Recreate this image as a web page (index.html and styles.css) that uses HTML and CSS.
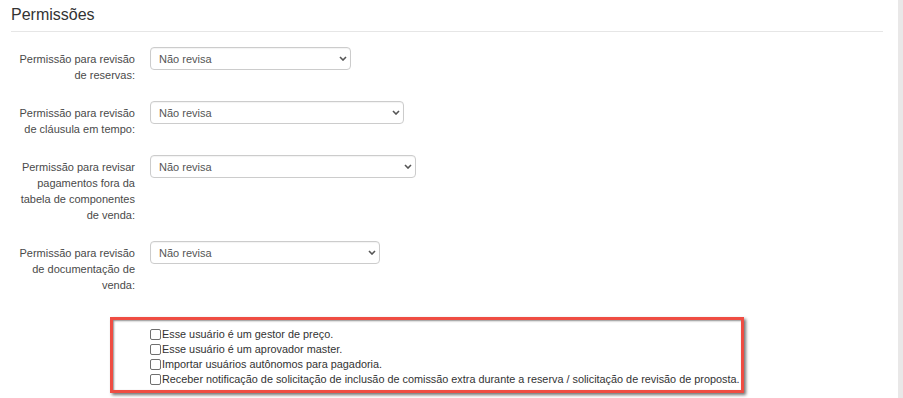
FILE: index.html
```html
<!DOCTYPE html>
<html lang="pt-BR">
<head>
  <meta charset="UTF-8">
  <meta name="viewport" content="width=device-width, initial-scale=1.0">
  <title>Permissões</title>
  <link rel="stylesheet" href="styles.css">
</head>
<body>
  <div class="page">
    <div class="content">
      <h1>Permissões</h1>
      <hr>

      <form class="perm-form">
        <div class="form-row">
          <label for="revReservas">Permissão para revisão de reservas:</label>
          <div class="select-wrap w1">
            <select id="revReservas"><option>Não revisa</option></select>
            <svg class="chev" width="8" height="5" viewBox="0 0 8 5"><path d="M1 1l3 3 3-3" fill="none" stroke="#555" stroke-width="1.6"/></svg>
          </div>
        </div>

        <div class="form-row">
          <label for="revClausula">Permissão para revisão de cláusula em tempo:</label>
          <div class="select-wrap w2">
            <select id="revClausula"><option>Não revisa</option></select>
            <svg class="chev" width="8" height="5" viewBox="0 0 8 5"><path d="M1 1l3 3 3-3" fill="none" stroke="#555" stroke-width="1.6"/></svg>
          </div>
        </div>

        <div class="form-row">
          <label for="revPagamentos">Permissão para revisar pagamentos fora da tabela de componentes de venda:</label>
          <div class="select-wrap w3">
            <select id="revPagamentos"><option>Não revisa</option></select>
            <svg class="chev" width="8" height="5" viewBox="0 0 8 5"><path d="M1 1l3 3 3-3" fill="none" stroke="#555" stroke-width="1.6"/></svg>
          </div>
        </div>

        <div class="form-row">
          <label for="revDocumentacao">Permissão para revisão de documentação de venda:</label>
          <div class="select-wrap w4">
            <select id="revDocumentacao"><option>Não revisa</option></select>
            <svg class="chev" width="8" height="5" viewBox="0 0 8 5"><path d="M1 1l3 3 3-3" fill="none" stroke="#555" stroke-width="1.6"/></svg>
          </div>
        </div>

        <div class="checks">
          <label class="check"><input type="checkbox">Esse usuário é um gestor de preço.</label>
          <label class="check"><input type="checkbox">Esse usuário é um aprovador master.</label>
          <label class="check"><input type="checkbox">Importar usuários autônomos para pagadoria.</label>
          <label class="check"><input type="checkbox">Receber notificação de solicitação de inclusão de comissão extra durante a reserva / solicitação de revisão de proposta.</label>
        </div>
      </form>
    </div>
    <div class="scroll-track"></div>
  </div>
</body>
</html>
```

FILE: styles.css
```css
body {
  margin: 0;
  font-family: "Liberation Sans", Arial, sans-serif;
  background-color: #fff;
  color: #333;
}

.page {
  display: flex;
  height: 398px;
  overflow: hidden;
}

.content {
  width: 872px;
  padding-left: 11px;
  padding-right: 15px;
}

.scroll-track {
  width: 5px;
  background-color: #e9e8e8;
}

h1 {
  margin: 6px 0 0;
  font-size: 16px;
  line-height: 18px;
  font-weight: normal;
  color: #333;
}

hr {
  margin: 7px 0 0;
  border: none;
  border-top: 1px solid #e6e6e6;
}

.perm-form {
  padding-top: 15px;
}

.form-row {
  display: flex;
  align-items: flex-start;
  gap: 15px;
  margin-bottom: 18px;
}

.form-row label {
  width: 124px;
  padding-top: 4px;
  text-align: right;
  font-size: 11px;
  line-height: 16px;
  color: #4a4a4a;
}

.select-wrap {
  position: relative;
}

.select-wrap.w1 { width: 201px; }
.select-wrap.w2 { width: 254px; }
.select-wrap.w3 { width: 266px; }
.select-wrap.w4 { width: 230px; }

select {
  appearance: none;
  -webkit-appearance: none;
  width: 100%;
  height: 23px;
  padding: 0 20px 0 8px;
  border: 1px solid #ccc;
  border-radius: 4px;
  background-color: #fff;
  font-family: "Liberation Sans", Arial, sans-serif;
  font-size: 11px;
  color: #555;
  box-shadow: inset 0 1px 1px rgba(0, 0, 0, 0.05);
}

.chev {
  position: absolute;
  right: 4px;
  top: 9px;
}

.checks {
  width: 591px;
  margin: 24px 0 0 99px;
  padding: 7px 0 3px 37px;
  border: 3px solid #ef4d43;
  box-shadow: 2px 2px 3px rgba(0, 0, 0, 0.55), inset 1px 1px 2px rgba(0, 0, 0, 0.45);
}

.check {
  display: flex;
  align-items: center;
  font-size: 10.85px;
  line-height: 15px;
  color: #333;
  white-space: nowrap;
}

.check input {
  flex-shrink: 0;
  appearance: none;
  -webkit-appearance: none;
  width: 11px;
  height: 11px;
  margin: 0 1px 0 0;
  border: 1px solid #6f6f6f;
  border-radius: 2px;
  background-color: #fff;
}
```
